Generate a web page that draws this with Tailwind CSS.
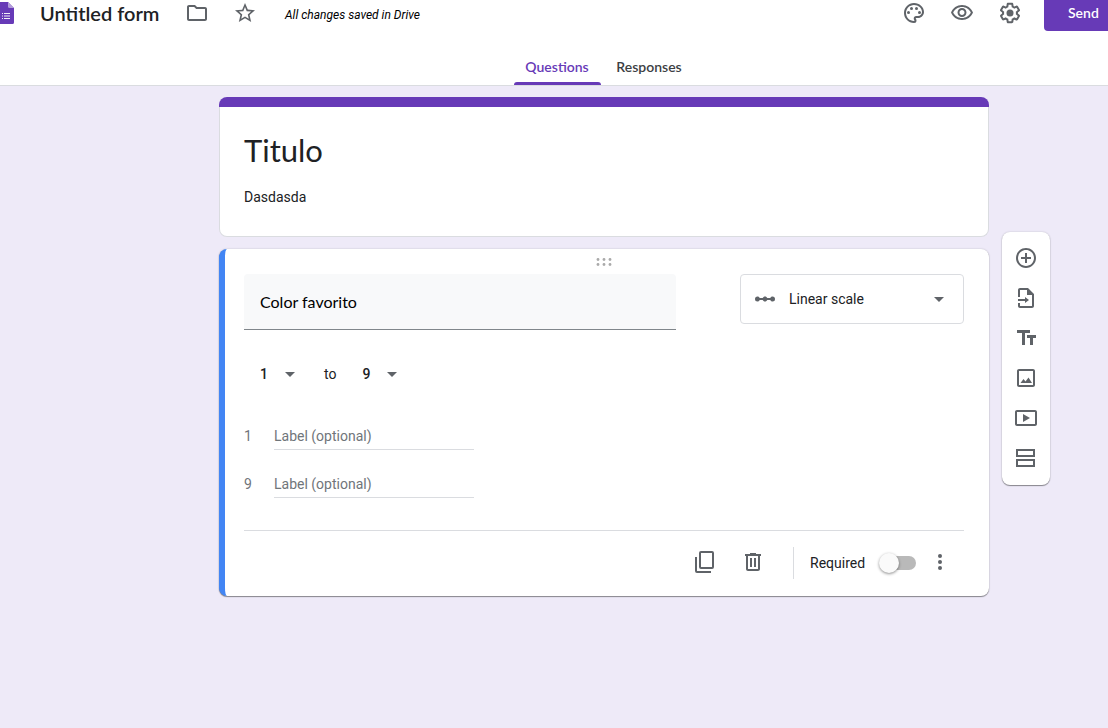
<!DOCTYPE html>
<html lang="en">
<head>
<meta charset="utf-8">
<meta name="viewport" content="width=device-width, initial-scale=1">
<title>Untitled form</title>
<script src="https://cdn.jsdelivr.net/npm/@tailwindcss/browser@4"></script>
</head>
<body class="min-h-screen overflow-x-hidden bg-[#eeeaf8] font-[Roboto,sans-serif] text-sm text-[#202124]">

<header class="border-b border-[#dadce0] bg-white">
  <div class="flex h-[26px] items-center text-[#5f6368]">
    <svg class="h-[22px] w-[14px] shrink-0" viewBox="0 0 14 22" aria-hidden="true">
      <path d="M0 0h8l6 6v14.500a1.500 1.500 0 0 1-1.500 1.500H0z" fill="#673ab7"/>
      <path d="M8 0l6 6H9.500A1.500 1.500 0 0 1 8 4.500z" fill="#b39ddb"/>
      <path d="M4 11h6v1H4zm0 2.500h6v1H4zm0 2.500h6v1H4zM2 11h1v1H2zm0 2.500h1v1H2zm0 2.500h1v1H2z" fill="#f1edf8"/>
    </svg>
    <input type="text" aria-label="Form name" value="Untitled form" class="ml-[26px] h-7 w-[133px] font-[Lato,sans-serif] text-[20px] font-semibold text-[#202124] outline-none">
    <button type="button" aria-label="Move to folder" class="ml-3 size-6">
      <svg class="size-6" viewBox="0 0 24 24" fill="currentColor"><path d="M9.170 6l2 2H20v10H4V6h5.170M10 4H4c-1.100 0-1.990.900-1.990 2L2 18c0 1.100.900 2 2 2h16c1.100 0 2-.900 2-2V8c0-1.100-.900-2-2-2h-8l-2-2z"/></svg>
    </button>
    <button type="button" aria-label="Star" class="ml-6 size-6">
      <svg class="size-6" viewBox="0 0 24 24" fill="currentColor"><path d="M22 9.240l-7.190-.620L12 2 9.190 8.630 2 9.240l5.460 4.730L5.820 21 12 17.270 18.180 21l-1.630-7.030L22 9.240zM12 15.400l-3.760 2.270 1-4.280-3.320-2.880 4.380-.380L12 6.100l1.710 4.040 4.380.380-3.320 2.880 1 4.280L12 15.400z"/></svg>
    </button>
    <p class="ml-7 mt-1 text-xs text-black italic">All changes saved in Drive</p>
    <button type="button" aria-label="Customize theme" class="ml-auto size-6">
      <svg class="size-6" viewBox="0 0 24 24" fill="currentColor"><path d="M12 22C6.490 22 2 17.510 2 12S6.490 2 12 2s10 4.040 10 9c0 3.310-2.690 6-6 6h-1.770c-.280 0-.500.220-.500.500 0 .120.050.230.130.330.410.470.640 1.060.640 1.670A2.500 2.500 0 0 1 12 22zm0-18c-4.410 0-8 3.590-8 8s3.590 8 8 8c.280 0 .500-.220.500-.500a.540.540 0 0 0-.140-.350c-.410-.460-.630-1.050-.630-1.650a2.500 2.500 0 0 1 2.500-2.500H16c2.210 0 4-1.790 4-4 0-3.860-3.590-7-8-7z"/><circle cx="6.500" cy="11.500" r="1.500"/><circle cx="9.500" cy="7.500" r="1.500"/><circle cx="14.500" cy="7.500" r="1.500"/><circle cx="17.500" cy="11.500" r="1.500"/></svg>
    </button>
    <button type="button" aria-label="Preview" class="ml-6 size-6">
      <svg class="size-6" viewBox="0 0 24 24" fill="currentColor"><path d="M12 6c3.790 0 7.170 2.130 8.820 5.500C19.170 14.870 15.790 17 12 17s-7.170-2.130-8.820-5.500C4.830 8.130 8.210 6 12 6m0-2C7 4 2.730 7.110 1 11.500 2.730 15.890 7 19 12 19s9.270-3.110 11-7.500C21.270 7.110 17 4 12 4zm0 5c1.380 0 2.500 1.120 2.500 2.500S13.380 14 12 14s-2.500-1.120-2.500-2.500S10.620 9 12 9m0-2c-2.480 0-4.500 2.020-4.500 4.500S9.520 16 12 16s4.500-2.020 4.500-4.500S14.480 7 12 7z"/></svg>
    </button>
    <button type="button" aria-label="Settings" class="ml-6 size-6">
      <svg class="size-6" viewBox="0 0 24 24" fill="currentColor"><path d="M13.850 22.250h-3.700c-.740 0-1.360-.540-1.450-1.270l-.270-1.890c-.270-.140-.530-.290-.790-.460l-1.800.720c-.700.260-1.470-.030-1.810-.650L2.200 15.530c-.350-.660-.200-1.440.360-1.880l1.530-1.190c-.010-.150-.020-.300-.020-.460 0-.150.010-.310.020-.460l-1.520-1.190c-.590-.450-.740-1.260-.370-1.880l1.850-3.190c.340-.620 1.110-.900 1.790-.630l1.810.730c.260-.170.520-.320.780-.460l.270-1.910c.090-.700.710-1.250 1.440-1.250h3.700c.740 0 1.360.540 1.450 1.270l.270 1.890c.270.140.530.290.790.460l1.800-.720c.710-.260 1.480.030 1.820.650l1.840 3.180c.360.660.200 1.440-.360 1.880l-1.520 1.190c.010.150.020.300.020.460s-.010.310-.020.460l1.520 1.190c.560.450.720 1.230.370 1.860l-1.860 3.220c-.340.620-1.110.900-1.800.630l-1.800-.720c-.260.170-.520.320-.780.460l-.270 1.910c-.100.680-.720 1.220-1.460 1.220zm-3.230-2h2.760l.370-2.550.530-.220c.440-.180.880-.440 1.340-.780l.450-.340 2.380.960 1.380-2.400-2.030-1.580.070-.560c.030-.260.060-.510.060-.780s-.030-.530-.060-.780l-.070-.560 2.030-1.580-1.390-2.400-2.390.960-.450-.350c-.420-.320-.870-.580-1.330-.770l-.520-.220-.370-2.550h-2.760l-.370 2.550-.530.210c-.440.190-.880.440-1.340.790l-.450.330-2.380-.950-1.390 2.390 2.030 1.580-.070.560a7 7 0 0 0-.060.790c0 .260.020.530.060.780l.070.560-2.030 1.580 1.380 2.400 2.390-.960.450.350c.430.330.860.580 1.330.770l.530.220.380 2.550z"/><circle cx="12" cy="12" r="3.500"/></svg>
    </button>
    <button type="button" class="ml-[22px] h-9 w-16 rounded-l bg-[#673ab7] pl-6 text-left font-[Lato,sans-serif] text-[14px] font-semibold text-white">Send</button>
  </div>
  <nav class="mt-6 flex h-[35px] justify-center pl-[103px] font-[Lato,sans-serif] text-[14px] font-semibold">
    <a href="#questions" aria-current="page" class="flex w-[87px] flex-col items-center justify-between text-[#673ab7]"><span class="pt-[7px]">Questions</span><span class="h-[3px] w-full rounded-t-[3px] bg-[#673ab7]"></span></a>
    <a href="#responses" class="flex w-[97px] flex-col items-center text-[#3c4043]"><span class="pt-[7px]">Responses</span></a>
  </nav>
</header>

<main class="flex justify-center gap-[13px] pt-[11px] pl-[161px]">
  <div class="flex w-full max-w-[770px] min-w-0 flex-col gap-3">

    <section>
      <div class="h-[10px] rounded-t-lg bg-[#673ab7]"></div>
      <div class="rounded-b-lg border border-t-0 border-[#dadce0] bg-white px-6 pt-[22px] pb-[29px]">
        <h1 class="font-[Lato,sans-serif] text-[31px] leading-[42px]">Titulo</h1>
        <p class="mt-4 leading-5">Dasdasda</p>
      </div>
    </section>

    <section class="overflow-hidden rounded-lg border-l-[6px] border-[#4285f4] bg-white pr-[25px] pl-[19px] shadow-[0_1px_1px_rgba(0,0,0,0.4),0_0_2px_rgba(0,0,0,0.2)]">
      <div class="flex h-[25px] items-center justify-center">
        <svg class="h-2 w-4" viewBox="0 0 16 8" fill="#aaa" aria-hidden="true"><circle cx="2" cy="1.500" r="1.400"/><circle cx="8" cy="1.500" r="1.400"/><circle cx="14" cy="1.500" r="1.400"/><circle cx="2" cy="6.500" r="1.400"/><circle cx="8" cy="6.500" r="1.400"/><circle cx="14" cy="6.500" r="1.400"/></svg>
      </div>

      <div class="flex items-start gap-16">
        <input type="text" aria-label="Question" value="Color favorito" class="h-14 min-w-0 flex-1 rounded-t border-b border-[#80868b] bg-[#f8f9fa] px-4 font-[Lato,sans-serif] text-base text-black outline-none">
        <div class="grid w-56 items-center">
          <select aria-label="Question type" class="col-start-1 row-start-1 h-[50px] appearance-none rounded border border-[#dadce0] bg-transparent pl-12 outline-none">
            <option>Linear scale</option>
          </select>
          <svg class="pointer-events-none col-start-1 row-start-1 ml-[13px] size-6" viewBox="0 0 24 24" fill="#5f6368" aria-hidden="true"><path d="M19.500 9.500c-1.030 0-1.900.620-2.290 1.500h-2.920c-.390-.880-1.260-1.500-2.290-1.500s-1.900.620-2.290 1.500H6.790c-.390-.880-1.260-1.500-2.290-1.500a2.500 2.500 0 0 0 0 5c1.030 0 1.900-.620 2.290-1.500h2.920c.390.880 1.260 1.500 2.290 1.500s1.900-.620 2.290-1.500h2.920c.390.880 1.260 1.500 2.290 1.500a2.500 2.500 0 0 0 0-5z"/></svg>
          <svg class="pointer-events-none col-start-1 row-start-1 mr-5 h-[5px] w-[10px] justify-self-end" viewBox="0 0 10 5" fill="#5f6368" aria-hidden="true"><path d="M0 0h10L5 5z"/></svg>
        </div>
      </div>

      <div class="mt-7 flex h-8 items-center pl-4">
        <div class="grid w-[35px] items-center">
          <select aria-label="Scale start" class="col-start-1 row-start-1 h-8 appearance-none bg-transparent font-medium outline-none"><option>1</option></select>
          <svg class="pointer-events-none col-start-1 row-start-1 h-[5px] w-[10px] justify-self-end" viewBox="0 0 10 5" fill="#5f6368" aria-hidden="true"><path d="M0 0h10L5 5z"/></svg>
        </div>
        <span class="mr-[26px] ml-[29px]">to</span>
        <div class="grid w-[35px] items-center">
          <select aria-label="Scale end" class="col-start-1 row-start-1 h-8 appearance-none bg-transparent font-medium outline-none"><option>9</option></select>
          <svg class="pointer-events-none col-start-1 row-start-1 h-[5px] w-[10px] justify-self-end" viewBox="0 0 10 5" fill="#5f6368" aria-hidden="true"><path d="M0 0h10L5 5z"/></svg>
        </div>
      </div>

      <div class="mt-8 flex flex-col gap-5 text-[#70757a]">
        <div class="flex h-7 items-center">
          <label for="low" class="w-[30px]">1</label>
          <input id="low" type="text" placeholder="Label (optional)" class="h-7 w-[200px] border-b border-[#dadce0] outline-none placeholder:text-[#70757a]">
        </div>
        <div class="flex h-7 items-center">
          <label for="high" class="w-[30px]">9</label>
          <input id="high" type="text" placeholder="Label (optional)" class="h-7 w-[200px] border-b border-[#dadce0] outline-none placeholder:text-[#70757a]">
        </div>
      </div>

      <div class="mt-8 flex h-[66px] items-center justify-end border-t border-[#dadce0] pr-3 pb-[2px]">
        <button type="button" aria-label="Duplicate" class="mb-[2px] size-6 text-[#5f6368]">
          <svg class="size-6" viewBox="0 0 24 24" fill="none" stroke="currentColor" stroke-width="2"><rect x="7" y="2" width="13" height="16" rx="1"/><path d="M3 7v14a1 1 0 0 0 1 1h14"/></svg>
        </button>
        <button type="button" aria-label="Delete" class="mb-[2px] ml-6 size-6 text-[#5f6368]">
          <svg class="size-6" viewBox="0 0 24 24" fill="currentColor"><path d="M15 4V3H9v1H4v2h1v13c0 1.100.900 2 2 2h10c1.100 0 2-.900 2-2V6h1V4h-5zm2 15H7V6h10v13zM9 8h2v9H9zm4 0h2v9h-2z"/></svg>
        </button>
        <div class="ml-7 h-8 w-px bg-[#dadce0]"></div>
        <label for="required" class="ml-4 w-[57px]">Required</label>
        <span class="ml-3 grid w-[37px] items-center">
          <input id="required" type="checkbox" role="switch" class="peer col-start-1 row-start-1 ml-[5px] h-[14px] appearance-none rounded-full bg-[#b9b9b9] checked:bg-[#b39ddb]">
          <span class="pointer-events-none col-start-1 row-start-1 size-5 rounded-full bg-[#fafafa] shadow-[0_1px_3px_rgba(0,0,0,0.45)] peer-checked:justify-self-end"></span>
        </span>
        <button type="button" aria-label="More options" class="mb-[2px] ml-3 size-6 text-[#5f6368]">
          <svg class="size-6" viewBox="0 0 24 24" fill="currentColor"><circle cx="12" cy="6" r="2"/><circle cx="12" cy="12" r="2"/><circle cx="12" cy="18" r="2"/></svg>
        </button>
      </div>
    </section>
  </div>

  <aside aria-label="Add items" class="mt-[135px] flex w-12 shrink-0 flex-col self-start rounded-lg bg-white pt-[6px] pb-[7px] text-[#5f6368] shadow-[0_1px_1px_rgba(0,0,0,0.4),0_0_2px_rgba(0,0,0,0.2)]">
    <button type="button" aria-label="Add question" class="grid h-10 place-items-center">
      <svg class="size-6" viewBox="0 0 24 24" fill="currentColor"><path d="M13 7h-2v4H7v2h4v4h2v-4h4v-2h-4V7zm-1-5C6.480 2 2 6.480 2 12s4.480 10 10 10 10-4.480 10-10S17.520 2 12 2zm0 18c-4.410 0-8-3.590-8-8s3.590-8 8-8 8 3.590 8 8-3.590 8-8 8z"/></svg>
    </button>
    <button type="button" aria-label="Import questions" class="grid h-10 place-items-center">
      <svg class="size-6" viewBox="0 0 24 24" fill="currentColor"><path d="M14 2H6c-1.100 0-2 .900-2 2v7h2V4h7v5h5v11H6v-3H4v3c0 1.100.900 2 2 2h12c1.100 0 2-.900 2-2V8l-6-6z"/><path d="M4 13h7v-2l4 3-4 3v-2H4z"/></svg>
    </button>
    <button type="button" aria-label="Add title and description" class="grid h-10 place-items-center">
      <svg class="size-6" viewBox="0 0 24 24" fill="currentColor"><path d="M3 4h13v3h-5v12H8V7H3zM13 9h9v3h-3v7h-3v-7h-3z"/></svg>
    </button>
    <button type="button" aria-label="Add image" class="grid h-10 place-items-center">
      <svg class="size-6" viewBox="0 0 24 24" fill="currentColor"><path d="M19 3H5c-1.100 0-2 .900-2 2v14c0 1.100.900 2 2 2h14c1.100 0 2-.900 2-2V5c0-1.100-.900-2-2-2zm0 16H5V5h14v14z"/><path d="M6.500 17l3-4 2 2.500 3-4L18 17z"/></svg>
    </button>
    <button type="button" aria-label="Add video" class="grid h-10 place-items-center">
      <svg class="size-6" viewBox="0 0 24 24" fill="currentColor"><path d="M21 4H3c-1.100 0-2 .900-2 2v12c0 1.100.900 2 2 2h18c1.100 0 2-.900 2-2V6c0-1.100-.900-2-2-2zm0 14H3V6h18v12z"/><path d="M9 8v8l7-4z"/></svg>
    </button>
    <button type="button" aria-label="Add section" class="grid h-10 place-items-center">
      <svg class="size-6" viewBox="0 0 24 24" fill="none" stroke="currentColor" stroke-width="2"><rect x="3" y="4" width="17" height="6"/><rect x="3" y="14" width="17" height="6"/></svg>
    </button>
  </aside>
</main>
</body>
</html>
